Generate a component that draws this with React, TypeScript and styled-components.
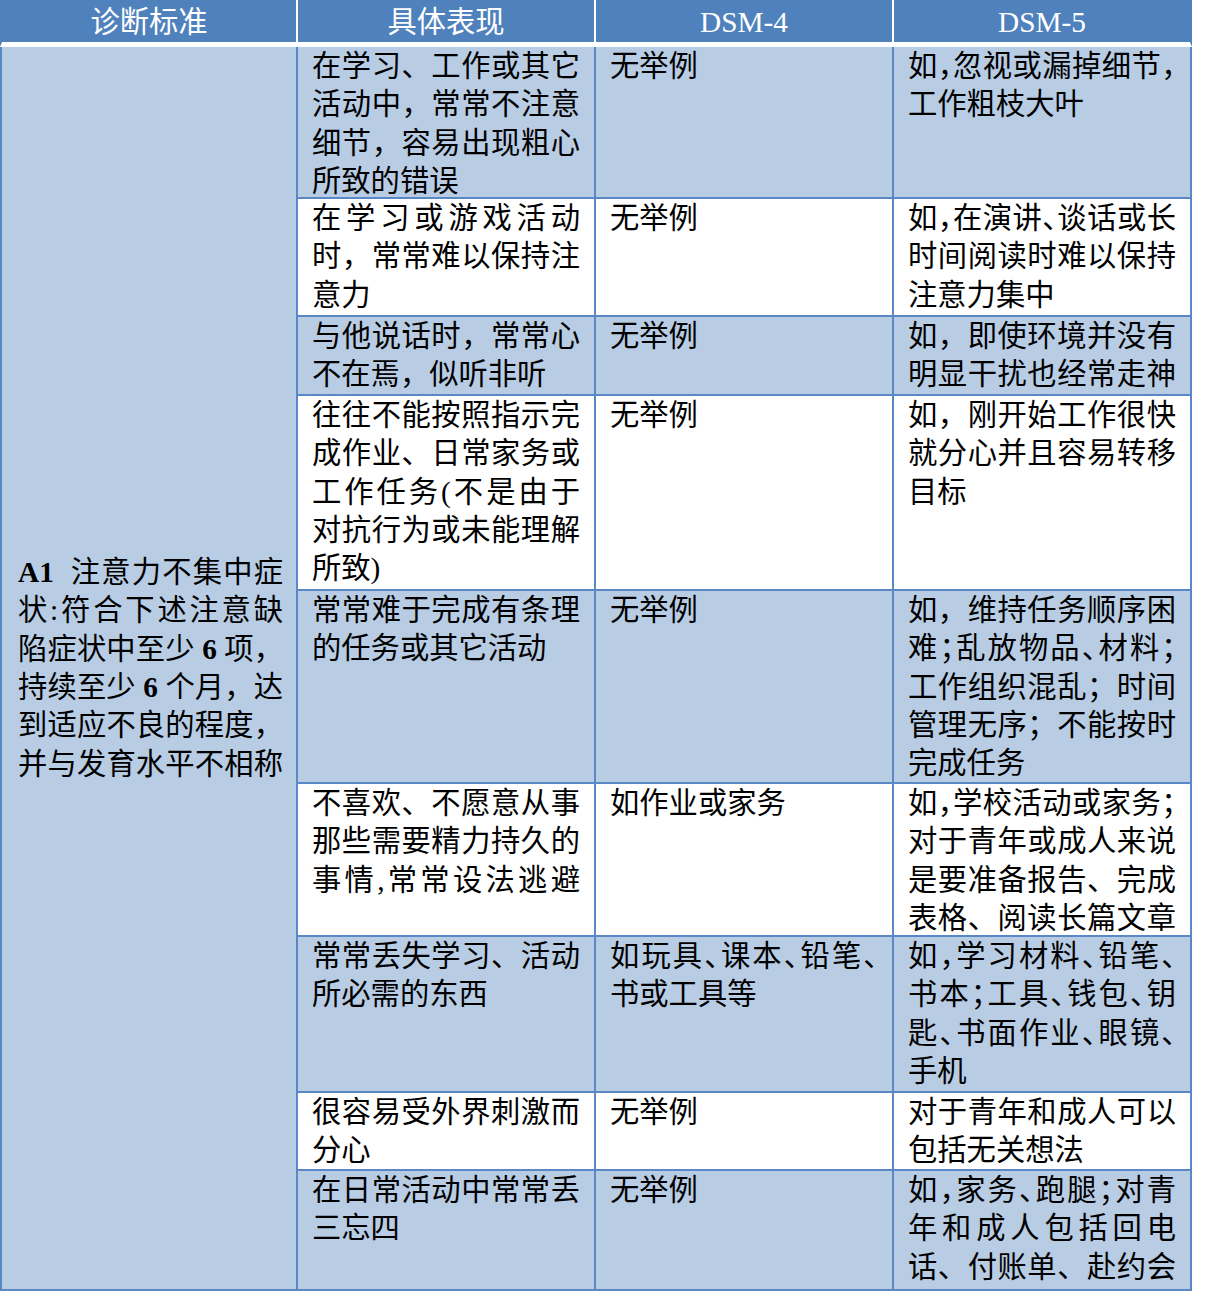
import React from "react";
import styled, { createGlobalStyle } from "styled-components";

const HEAD_BLUE = "#4F81BD";
const LINE_BLUE = "#5A88C6";
const LIGHT = "#B8CCE4";

const GlobalStyle = createGlobalStyle`
  html, body { margin: 0; padding: 0; background: #ffffff; }
  body { font-family: "Liberation Serif", "Noto Sans CJK SC", serif; }
`;

const Table = styled.table`
  border-collapse: separate;
  border-spacing: 0;
  table-layout: fixed;
  width: 1192px;
  font-family: "Liberation Serif", "Noto Sans CJK SC", serif;
  font-size: 29.3px;
  color: #000000;
`;

const Col = styled.col`
  width: 298px;
`;

const Row = styled.tr<{ $h: number }>`
  height: ${(p) => p.$h}px;
`;

const HeadCell = styled.th<{ $first?: boolean; $last?: boolean }>`
  box-sizing: border-box;
  padding: 2px 0 0 0;
  background: ${HEAD_BLUE};
  color: #ffffff;
  font-weight: normal;
  text-align: center;
  line-height: 38px;
  vertical-align: middle;
  border-left: ${(p) => (p.$first ? `2px solid ${HEAD_BLUE}` : "none")};
  border-right: 2px solid ${(p) => (p.$last ? HEAD_BLUE : "#ffffff")};
  border-bottom: 5px solid #ffffff;
`;

const CriteriaCell = styled.td`
  box-sizing: border-box;
  background: ${LIGHT};
  vertical-align: middle;
  padding: 0 13px 0 16px;
  border-left: 2px solid ${LINE_BLUE};
  border-right: 2px solid ${LINE_BLUE};
  border-bottom: 2px solid ${LINE_BLUE};
`;

const Cell = styled.td<{ $shaded: boolean }>`
  box-sizing: border-box;
  background: ${(p) => (p.$shaded ? LIGHT : "#ffffff")};
  vertical-align: top;
  padding: 0 14px;
  border-right: 2px solid ${LINE_BLUE};
  border-bottom: 2px solid ${LINE_BLUE};
`;

const CellBody = styled.div`
  margin-bottom: -10px;
`;

const Line = styled.div<{ $fill: boolean; $tight: boolean }>`
  line-height: 38.3px;
  white-space: nowrap;
  text-align: ${(p) => (p.$fill ? "justify" : "left")};
  text-align-last: ${(p) => (p.$fill ? "justify" : "left")};
  font-feature-settings: ${(p) => (p.$tight ? '"halt" 1' : "normal")};
`;

const Num = styled.span`
  font-weight: bold;
`;

type RowData = { h: number; c2: string[]; c3: string[]; c4: string[] };

const rows: RowData[] = [
  {
    h: 152,
    c2: ["在学习、工作或其它", "活动中，常常不注意", "细节，容易出现粗心", "所致的错误"],
    c3: ["无举例"],
    c4: ["如，忽视或漏掉细节，", "工作粗枝大叶"],
  },
  {
    h: 118,
    c2: ["在学习或游戏活动", "时，常常难以保持注", "意力"],
    c3: ["无举例"],
    c4: ["如，在演讲、谈话或长", "时间阅读时难以保持", "注意力集中"],
  },
  {
    h: 79,
    c2: ["与他说话时，常常心", "不在焉，似听非听"],
    c3: ["无举例"],
    c4: ["如，即使环境并没有", "明显干扰也经常走神"],
  },
  {
    h: 195,
    c2: ["往往不能按照指示完", "成作业、日常家务或", "工作任务(不是由于", "对抗行为或未能理解", "所致)"],
    c3: ["无举例"],
    c4: ["如，刚开始工作很快", "就分心并且容易转移", "目标"],
  },
  {
    h: 193,
    c2: ["常常难于完成有条理", "的任务或其它活动"],
    c3: ["无举例"],
    c4: ["如，维持任务顺序困", "难；乱放物品、材料；", "工作组织混乱；时间", "管理无序；不能按时", "完成任务"],
  },
  {
    h: 153,
    c2: ["不喜欢、不愿意从事", "那些需要精力持久的", "事情,常常设法逃避"],
    c3: ["如作业或家务"],
    c4: ["如，学校活动或家务；", "对于青年或成人来说", "是要准备报告、完成", "表格、阅读长篇文章"],
  },
  {
    h: 156,
    c2: ["常常丢失学习、活动", "所必需的东西"],
    c3: ["如玩具、课本、铅笔、", "书或工具等"],
    c4: ["如，学习材料、铅笔、", "书本；工具、钱包、钥", "匙、书面作业、眼镜、", "手机"],
  },
  {
    h: 78,
    c2: ["很容易受外界刺激而", "分心"],
    c3: ["无举例"],
    c4: ["对于青年和成人可以", "包括无关想法"],
  },
  {
    h: 120,
    c2: ["在日常活动中常常丢", "三忘四"],
    c3: ["无举例"],
    c4: ["如，家务、跑腿；对青", "年和成人包括回电", "话、付账单、赴约会"],
  },
];

const Lines: React.FC<{ lines: string[] }> = ({ lines }) => (
  <CellBody>
    {lines.map((t, i) => {
      const len = Array.from(t).length;
      const fill = i < lines.length - 1 || len >= 9;
      return (
        <Line key={i} $fill={fill} $tight={len >= 10}>
          {t}
        </Line>
      );
    })}
  </CellBody>
);

const Criteria: React.FC = () => (
  <div>
    <Line $fill $tight={false}>
      <Num>A1</Num>
      {"\u00a0\u00a0注意力不集中症"}
    </Line>
    <Line $fill $tight={false}>状:符合下述注意缺</Line>
    <Line $fill $tight={false}>
      陷症状中至少 <Num>6</Num> 项，
    </Line>
    <Line $fill $tight={false}>
      持续至少 <Num>6</Num> 个月，达
    </Line>
    <Line $fill $tight={false}>到适应不良的程度，</Line>
    <Line $fill $tight={false}>并与发育水平不相称</Line>
  </div>
);

export default function App() {
  return (
    <>
      <GlobalStyle />
      <Table>
        <colgroup>
          <Col />
          <Col />
          <Col />
          <Col />
        </colgroup>
        <thead>
          <Row $h={47}>
            <HeadCell $first>诊断标准</HeadCell>
            <HeadCell>具体表现</HeadCell>
            <HeadCell>DSM-4</HeadCell>
            <HeadCell $last>DSM-5</HeadCell>
          </Row>
        </thead>
        <tbody>
          {rows.map((r, i) => (
            <Row key={i} $h={r.h}>
              {i === 0 && (
                <CriteriaCell rowSpan={rows.length}>
                  <Criteria />
                </CriteriaCell>
              )}
              <Cell $shaded={i % 2 === 0}>
                <Lines lines={r.c2} />
              </Cell>
              <Cell $shaded={i % 2 === 0}>
                <Lines lines={r.c3} />
              </Cell>
              <Cell $shaded={i % 2 === 0}>
                <Lines lines={r.c4} />
              </Cell>
            </Row>
          ))}
        </tbody>
      </Table>
    </>
  );
}
